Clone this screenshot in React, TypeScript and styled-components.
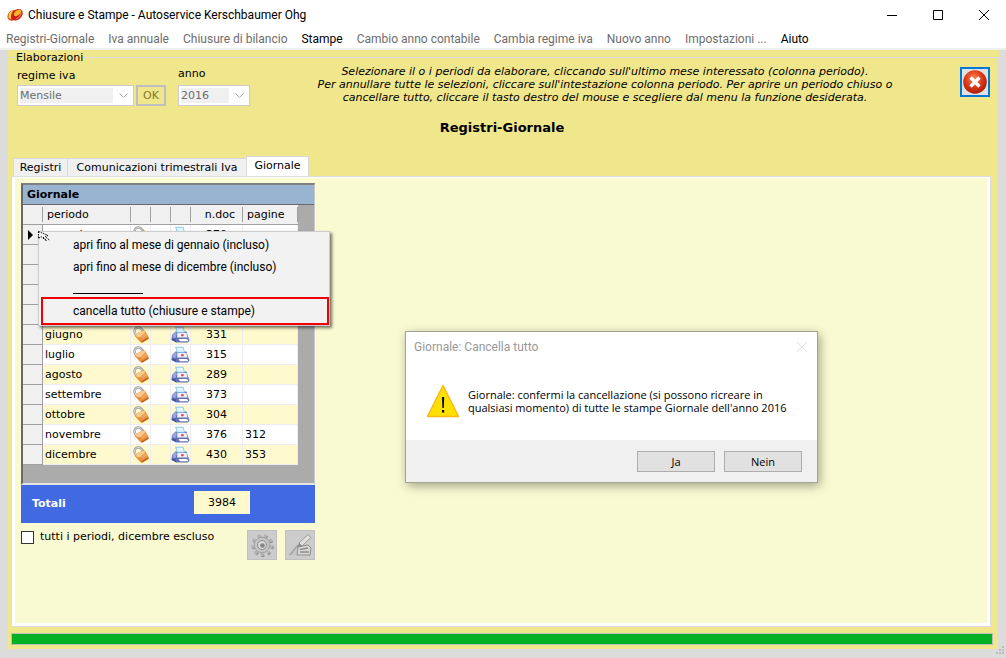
import React from "react";
import styled, { createGlobalStyle, css } from "styled-components";

const GlobalStyle = createGlobalStyle`
  * { box-sizing: border-box; }
  body {
    margin: 0;
    background: #dcdcdc;
    color: #000;
    font: 11px/16px "DejaVu Sans", sans-serif;
  }
  button, select, input { font: inherit; color: inherit; margin: 0; }
`;

const uiFont = css`
  font-family: Roboto, "Open Sans", sans-serif;
  font-size: 12px;
`;

const Window = styled.div`
  position: relative;
  display: flex;
  flex-direction: column;
  min-height: 100vh;
`;

const TitleBar = styled.header`
  ${uiFont}
  display: flex;
  align-items: center;
  height: 30px;
  padding: 0 16px 0 7px;
  background: #fff;
`;

const WindowTitle = styled.h1`
  flex: 1;
  margin: 0 0 0 5px;
  font-size: 12px;
  font-weight: 400;
`;

const CaptionButtons = styled.div`
  display: flex;
  gap: 34px;
`;

const CaptionButton = styled.button`
  display: flex;
  width: 12px;
  height: 12px;
  padding: 0;
  border: 0;
  background: none;
`;

const MenuBar = styled.nav`
  ${uiFont}
  display: flex;
  gap: 14px;
  height: 20px;
  padding: 0 6px;
  background: #fff;
  border-bottom: 2px solid #f0f0f0;
`;

const MenuEntry = styled.button`
  padding: 0;
  border: 0;
  background: none;
  line-height: 18px;
  white-space: nowrap;
  color: ${(p) => (p.disabled ? "#6d6d6d" : "#000")};
`;

const Frame = styled.main`
  flex: 1;
  display: flex;
  margin: 0 7px 8px 8px;
  background: #f0e68c;
`;

const Group = styled.fieldset`
  flex: 1;
  display: flex;
  flex-direction: column;
  min-width: 0;
  margin: 0;
  padding: 0 5px 4px 2px;
  border: 1px solid #dcdcdc;
  border-left-color: #f0e68c;
`;

const Legend = styled.legend`
  margin-left: 4px;
  padding: 0 1px;
  line-height: 15px;
`;

const HeaderRow = styled.div`
  display: flex;
  align-items: flex-start;
  padding: 0 3px 0 6px;
`;

const Filters = styled.div`
  display: flex;
  align-items: flex-end;
  padding-top: 1px;
`;

const Field = styled.div<{ $width: number; $gap: number }>`
  display: flex;
  flex-direction: column;
  gap: ${(p) => p.$gap}px;
  width: ${(p) => p.$width}px;
`;

const SelectBox = styled.div`
  display: flex;
  align-items: center;
  height: 21px;
  padding: 2px;
  border: 1px solid #ccc;
  background: #fff;
`;

const Select = styled.select`
  flex: 1;
  min-width: 0;
  height: 15px;
  padding: 0;
  border: 0;
  appearance: none;
  background: #f0f0f0;
  line-height: 15px;
  color: #6d6d6d;
  opacity: 1;
`;

const Chevron = styled.svg`
  margin: 0 3px 0 6px;
`;

const OkButton = styled.button`
  width: 30px;
  height: 21px;
  margin: 0 12px 0 2px;
  padding: 0;
  border: 2px solid #bfbfbf;
  background: #f0e68c;
  color: #827a2c;
`;

const Hint = styled.p`
  flex: 1;
  margin: 0;
  line-height: 13px;
  font-style: italic;
  text-align: center;
`;

const CloseButton = styled.button`
  display: flex;
  width: 30px;
  height: 30px;
  margin-top: 2px;
  padding: 1px;
  border: 2px solid #0078d7;
  background: #e1e1e1;
`;

const SectionTitle = styled.h2`
  margin: 14px 0 20px;
  font-size: 13px;
  line-height: 16px;
  text-align: center;
`;

const Tabs = styled.div`
  display: flex;
  align-items: flex-end;
  padding-left: 2px;
`;

const Tab = styled.button<{ $width: number; $active?: boolean }>`
  width: ${(p) => p.$width}px;
  height: ${(p) => (p.$active ? 20 : 18)}px;
  padding: ${(p) => (p.$active ? "0 0 2px" : "0")};
  border: 1px solid #d9d9d9;
  border-bottom: 0;
  border-right-width: ${(p) => (p.$active ? 1 : 0)}px;
  background: ${(p) => (p.$active ? "#fff" : "#f0f0f0")};
  line-height: 16px;
`;

const Panel = styled.section`
  flex: 1;
  display: flex;
  margin-right: 2px;
  padding: 1px 3px 3px;
  border: 1px solid #dcdcdc;
  background: #fff;
`;

const PanelBody = styled.div`
  flex: 1;
  padding: 5px 6px;
  background: #fafad2;
`;

const Column = styled.div`
  position: relative;
  width: 294px;
`;

const GridBox = styled.div`
  padding-bottom: 18px;
  border: 2px solid #696969;
  border-top-color: #808080;
  border-right: 1px solid #c8c8c8;
  border-bottom: 2px solid #e3e3e3;
  background: #ababab;
`;

const Table = styled.table`
  width: 275px;
  table-layout: fixed;
  border-collapse: separate;
  border-spacing: 0;
`;

const GridCaption = styled.h3`
  margin: 0;
  padding: 0 4px;
  height: 20px;
  border-bottom: 1px solid #696969;
  background: #99b4d1;
  font-size: 11px;
  line-height: 20px;
`;

const HeadCell = styled.th`
  height: 20px;
  padding: 0 4px;
  border-bottom: 1px solid #a0a0a0;
  background:
    linear-gradient(#a0a0a0, #a0a0a0) right 2px / 1px 15px no-repeat,
    #f0f0f0;
  font-weight: 400;
  line-height: 17px;
  text-align: left;
`;

const NumHeadCell = styled(HeadCell)`
  padding-right: 8px;
  text-align: right;
`;

const Row = styled.tr`
  background: #fff;
  &:nth-child(even) { background: #fffacd; }
`;

const RowHead = styled.th`
  width: 20px;
  height: 20px;
  padding: 0 0 0 5px;
  border-right: 1px solid #a0a0a0;
  border-bottom: 1px solid #a0a0a0;
  background: #f0f0f0;
  line-height: 0;
  text-align: left;
`;

const Cell = styled.td`
  height: 20px;
  padding: 0 2px;
  border-right: 1px solid #ececf2;
  border-bottom: 1px solid #ececf2;
  line-height: 18px;
  white-space: nowrap;
`;

const IconCell = styled(Cell)`
  padding: 0;
  line-height: 0;
  svg { display: block; margin: 0 auto; }
`;

const NumCell = styled(Cell)`
  text-align: center;
`;

const Totals = styled.div`
  display: flex;
  align-items: flex-start;
  height: 38px;
  padding: 6px 65px 0 11px;
  background: #4169e1;
  color: #fff;
  font-weight: 700;
`;

const TotalLabel = styled.label`
  flex: 1;
  padding-top: 5px;
`;

const TotalValue = styled.input`
  width: 56px;
  height: 23px;
  padding: 0;
  border: 0;
  background: #fffacd;
  color: #000;
  font-weight: 400;
  text-align: center;
`;

const Actions = styled.div`
  display: flex;
  align-items: flex-start;
  gap: 8px;
  margin-top: 7px;
`;

const CheckLabel = styled.label`
  flex: 1;
  display: flex;
  align-items: center;
  gap: 6px;
  line-height: 14px;
`;

const Checkbox = styled.input`
  width: 13px;
  height: 13px;
  appearance: none;
  border: 1px solid #333;
  background: #fff;
`;

const ToolButton = styled.button`
  display: flex;
  width: 30px;
  height: 30px;
  padding: 2px;
  border: 1px solid #bfbfbf;
  background: #ccc;
`;

const ContextMenu = styled.div`
  ${uiFont}
  position: absolute;
  top: 48px;
  left: 17px;
  width: 292px;
  padding: 2px 0 0 2px;
  border: 1px solid #ccc;
  background: #f2f2f2;
  box-shadow: 2px 2px 3px rgba(0, 0, 0, 0.55);
`;

const MenuItem = styled.button<{ $marked?: boolean }>`
  display: block;
  width: 100%;
  height: ${(p) => (p.$marked ? 28 : 22)}px;
  padding: 0 ${(p) => (p.$marked ? 30 : 32)}px;
  border: ${(p) => (p.$marked ? "2px solid #f00000" : "0")};
  background: none;
  text-align: left;
`;

const MenuRule = styled.hr`
  width: 70px;
  height: 1px;
  margin: 15px 0 3px 32px;
  border: 0;
  background: #000;
`;

const Pointer = styled.svg`
  position: absolute;
  top: -1px;
  left: -1px;
`;

const Progress = styled.div`
  height: 12px;
  margin-top: 6px;
  border: 1px solid #bcbcbc;
  background: #06b025;
`;

const Dialog = styled.div`
  ${uiFont}
  position: absolute;
  top: 331px;
  left: 405px;
  width: 413px;
  border: 1px solid #a3a393;
  background: #fff;
  box-shadow: 2px 3px 10px rgba(0, 0, 0, 0.35);
`;

const DialogTitle = styled.div`
  display: flex;
  justify-content: space-between;
  align-items: center;
  height: 30px;
  padding: 0 9px 0 8px;
  color: #999;
`;

const DialogBody = styled.div`
  display: flex;
  align-items: center;
  gap: 8px;
  height: 78px;
  padding: 0 20px;
`;

const DialogText = styled.p`
  margin: 0;
  font-family: "Open Sans", sans-serif;
  font-size: 11px;
  line-height: 13px;
`;

const DialogFooter = styled.div`
  display: flex;
  justify-content: flex-end;
  gap: 9px;
  padding: 11px 15px 10px;
  background: #f0f0f0;
`;

const DialogButton = styled.button`
  width: 78px;
  height: 21px;
  padding: 0;
  border: 1px solid #adadad;
  background: #e1e1e1;
  font-family: "Open Sans", sans-serif;
  font-size: 11px;
`;

const Grip = styled.svg`
  position: absolute;
  right: 0;
  bottom: 2px;
`;

const Logo = () => (
  <svg width="16" height="14" viewBox="0 0 16 14" aria-hidden="true">
    <ellipse cx="5.500" cy="7.400" rx="5.800" ry="4.600" transform="rotate(-50 5.500 7.400)" fill="#e0521a" />
    <ellipse cx="10" cy="6.800" rx="6.600" ry="4.800" transform="rotate(-45 10 6.800)" fill="#c8201c" />
    <ellipse cx="10.500" cy="4.800" rx="4.200" ry="2.400" transform="rotate(-38 10.500 4.800)" fill="#f9b52a" />
    <path d="M1.800 10C1 6 3.500 2.800 6.500 1.800 4.500 4.500 3.600 7.500 4 11Z" fill="#ffd24a" />
    <path d="M9 11C11.500 10 13.800 7.500 14.300 4.500" stroke="#f07a4a" strokeWidth="1.200" fill="none" />
  </svg>
);

const Lock = () => (
  <svg width="16" height="17" viewBox="0 0 16 17" aria-hidden="true">
    <path d="M3.500 10.500 1.800 6.800C0.800 3.500 3 1.600 5 1.500 8 1.300 9.500 3.500 11 6.500" fill="none" stroke="#9c9a98" strokeWidth="2.400" />
    <path d="M3.200 9.500 1.800 6.500C1 3.500 3 1.800 5 1.600 7 1.500 8.500 2.600 9.500 4.300" fill="none" stroke="#e6e4e2" strokeWidth="1" />
    <path d="M2.500 9.300Q6 5 12 4.600L15.800 11.500Q15.800 12.800 14.800 13.400L9.300 16.800 7.500 16.300 3 11.500Z" fill="#e78f3c" />
    <path d="M2.500 9.300Q6 5 12 4.600L12.500 6 7.500 11 4.500 11.500Z" fill="#fbc98a" />
    <path d="M7.500 11 12.500 6 14.500 9.500 9 13.500Z" fill="#f2a354" />
    <path d="M8.800 16.800 15.700 12.600 15.300 11.300 8.500 15.400Z" fill="#b3601f" />
  </svg>
);

const Printer = () => (
  <svg width="19" height="17" viewBox="0 0 19 17" aria-hidden="true">
    <path d="M1 9 4.500 5.500 15.500 5.500 17 10.500 18.500 14.500 17 16.500H5L0.500 14Z" fill="#6472b6" />
    <path d="M4 0.800H12.500L14 6.800H6Z" fill="#8ccdf0" />
    <path d="M5.300 1.800H11.800L12.800 5.800H6.700Z" fill="#e2f6ff" />
    <path d="M1.500 9 4.500 6 6 7.500 4.500 12 1.200 11.500Z" fill="#99a5dc" />
    <path d="M6.500 7H15.500L16.500 11.500H6Z" fill="#eceefa" />
    <path d="M1 12.200 5 13.500V15.800L0.800 14Z" fill="#46529a" />
    <path d="M7.500 13H16L17.500 15.300H9Z" fill="#fff" />
    <rect x="10.200" y="8.200" width="2.400" height="2" fill="#e03a4a" />
  </svg>
);

const CloseBall = () => (
  <svg width="24" height="24" viewBox="0 0 24 24" aria-hidden="true">
    <defs>
      <radialGradient id="ball" cx="0.450" cy="0.350" r="0.650">
        <stop offset="0" stopColor="#f58a5c" />
        <stop offset="0.550" stopColor="#de3a17" />
        <stop offset="1" stopColor="#a81e0a" />
      </radialGradient>
    </defs>
    <circle cx="12" cy="12" r="11.800" fill="url(#ball)" />
    <path d="M7.500 7.500 16.500 16.500M16.500 7.500 7.500 16.500" stroke="#fff" strokeWidth="3.400" />
  </svg>
);

const Gear = () => (
  <svg width="24" height="24" viewBox="0 0 24 24" aria-hidden="true">
    <circle cx="12.800" cy="13" r="9.500" fill="none" stroke="#8e8e8e" strokeWidth="3" strokeDasharray="3 3.630" />
    <circle cx="12" cy="12" r="9.500" fill="none" stroke="#b4b4b4" strokeWidth="3" strokeDasharray="3 3.630" />
    <circle cx="12" cy="12" r="7.800" fill="#c4c4c4" stroke="#a2a2a2" />
    <circle cx="12" cy="12" r="4.500" fill="#dadada" stroke="#8e8e8e" />
    <circle cx="12.500" cy="12.500" r="2.300" fill="#858585" />
  </svg>
);

const Sign = () => (
  <svg width="24" height="24" viewBox="0 0 24 24" aria-hidden="true">
    <path d="M1 22 9 12 13 12 7 22Z" fill="#a2a2a2" />
    <path d="M3 22 9 14 10 22Z" fill="#c6c6c6" />
    <path d="M10 14 20 12 23 15 22 22 9 22Z" fill="#d6d6d6" stroke="#909090" />
    <path d="M12 19H21M12 16.500 20 15" stroke="#8e8e8e" strokeWidth="1.500" />
    <path d="M11 10 20 1.500 23 4.500 14 13Z" fill="#e0e0e0" stroke="#999" />
    <path d="M11 10 14 13 9.500 14Z" fill="#8a8a8a" />
  </svg>
);

const Warning = () => (
  <svg width="34" height="34" viewBox="0 0 34 34" aria-hidden="true">
    <path d="M17 1.500 32.500 32.500H1.500Z" fill="#ffe100" stroke="#fdb913" strokeWidth="1.500" strokeLinejoin="round" />
    <path d="M16 13h2.200l-.4 11h-1.400ZM16 26h2.200v2.400H16Z" fill="#000" />
  </svg>
);

const Down = () => (
  <Chevron width="9" height="6" viewBox="0 0 9 6" aria-hidden="true">
    <path d="M0.500 0.500 4.500 4.500 8.500 0.500" fill="none" stroke="#adadad" />
  </Chevron>
);

const menuEntries = [
  ["Registri-Giornale", false],
  ["Iva annuale", false],
  ["Chiusure di bilancio", false],
  ["Stampe", true],
  ["Cambio anno contabile", false],
  ["Cambia regime iva", false],
  ["Nuovo anno", false],
  ["Impostazioni ...", false],
  ["Aiuto", true],
] as const;

const months: { name?: string; docs?: number; pages?: number }[] = [
  { name: "gennaio", docs: 370 },
  {},
  {},
  {},
  {},
  { name: "giugno", docs: 331 },
  { name: "luglio", docs: 315 },
  { name: "agosto", docs: 289 },
  { name: "settembre", docs: 373 },
  { name: "ottobre", docs: 304 },
  { name: "novembre", docs: 376, pages: 312 },
  { name: "dicembre", docs: 430, pages: 353 },
];

const columnWidths = [20, 88, 20, 20, 20, 52, 55];

export default function App() {
  return (
    <Window>
      <GlobalStyle />
      <TitleBar>
        <Logo />
        <WindowTitle>Chiusure e Stampe - Autoservice Kerschbaumer Ohg</WindowTitle>
        <CaptionButtons>
          <CaptionButton aria-label="Minimize">
            <svg width="12" height="12"><path d="M1 6.500H11" stroke="#000" /></svg>
          </CaptionButton>
          <CaptionButton aria-label="Maximize">
            <svg width="12" height="12"><path d="M1.500 1.500h9v9h-9Z" fill="none" stroke="#000" /></svg>
          </CaptionButton>
          <CaptionButton aria-label="Close">
            <svg width="12" height="12"><path d="M1 1 11 11M11 1 1 11" stroke="#000" /></svg>
          </CaptionButton>
        </CaptionButtons>
      </TitleBar>
      <MenuBar>
        {menuEntries.map(([label, enabled]) => (
          <MenuEntry key={label} disabled={!enabled}>{label}</MenuEntry>
        ))}
      </MenuBar>
      <Frame>
        <Group>
          <Legend>Elaborazioni</Legend>
          <HeaderRow>
            <Filters>
              <Field $width={117} $gap={1}>
                <label htmlFor="regime">regime iva</label>
                <SelectBox>
                  <Select id="regime" disabled><option>Mensile</option></Select>
                  <Down />
                </SelectBox>
              </Field>
              <OkButton disabled>OK</OkButton>
              <Field $width={72} $gap={3}>
                <label htmlFor="anno">anno</label>
                <SelectBox>
                  <Select id="anno" disabled><option>2016</option></Select>
                  <Down />
                </SelectBox>
              </Field>
            </Filters>
            <Hint>
              Selezionare il o i periodi da elaborare, cliccando sull'ultimo mese interessato (colonna periodo).<br />
              Per annullare tutte le selezioni, cliccare sull'intestazione colonna periodo. Per aprire un periodo chiuso o<br />
              cancellare tutto, cliccare il tasto destro del mouse e scegliere dal menu la funzione desiderata.
            </Hint>
            <CloseButton aria-label="Chiudi"><CloseBall /></CloseButton>
          </HeaderRow>
          <SectionTitle>Registri-Giornale</SectionTitle>
          <Tabs role="tablist">
            <Tab role="tab" $width={54}>Registri</Tab>
            <Tab role="tab" $width={179}>Comunicazioni trimestrali Iva</Tab>
            <Tab role="tab" aria-selected $width={63} $active>Giornale</Tab>
          </Tabs>
          <Panel>
            <PanelBody>
              <Column>
                <GridBox>
                  <GridCaption>Giornale</GridCaption>
                  <Table>
                    <colgroup>
                      {columnWidths.map((w, i) => <col key={i} width={w} />)}
                    </colgroup>
                    <thead>
                      <tr>
                        <HeadCell />
                        <HeadCell>periodo</HeadCell>
                        <HeadCell />
                        <HeadCell />
                        <HeadCell />
                        <NumHeadCell>n.doc</NumHeadCell>
                        <HeadCell>pagine</HeadCell>
                      </tr>
                    </thead>
                    <tbody>
                      {months.map((m, i) => (
                        <Row key={i}>
                          <RowHead>
                            {i === 0 && (
                              <svg width="6" height="10"><path d="M0 0 5 5 0 10Z" /></svg>
                            )}
                          </RowHead>
                          <Cell>{m.name}</Cell>
                          <IconCell><Lock /></IconCell>
                          <IconCell />
                          <IconCell><Printer /></IconCell>
                          <NumCell>{m.docs}</NumCell>
                          <Cell>{m.pages}</Cell>
                        </Row>
                      ))}
                    </tbody>
                  </Table>
                </GridBox>
                <Totals>
                  <TotalLabel htmlFor="totale">Totali</TotalLabel>
                  <TotalValue id="totale" readOnly value="3984" />
                </Totals>
                <Actions>
                  <CheckLabel>
                    <Checkbox type="checkbox" />
                    tutti i periodi, dicembre escluso
                  </CheckLabel>
                  <ToolButton disabled aria-label="Elabora"><Gear /></ToolButton>
                  <ToolButton disabled aria-label="Stampa"><Sign /></ToolButton>
                </Actions>
                <ContextMenu>
                  <MenuItem>apri fino al mese di gennaio (incluso)</MenuItem>
                  <MenuItem>apri fino al mese di dicembre (incluso)</MenuItem>
                  <MenuRule />
                  <MenuItem $marked>cancella tutto (chiusure e stampe)</MenuItem>
                  <Pointer width="14" height="12" viewBox="0 0 14 12" aria-hidden="true">
                    <path d="M0.500 0.500V7.500L3 5.500 8 9.500M0.500 0.500 10 4.500 7 5.500 12 9.500M5 6 9 10" fill="#fff" stroke="#000" strokeDasharray="1.500 1" />
                  </Pointer>
                </ContextMenu>
              </Column>
            </PanelBody>
          </Panel>
          <Progress role="progressbar" aria-valuenow={100} />
        </Group>
      </Frame>
      <Dialog role="dialog" aria-labelledby="dialog-title">
        <DialogTitle>
          <span id="dialog-title">Giornale: Cancella tutto</span>
          <CaptionButton aria-label="Chiudi">
            <svg width="12" height="12"><path d="M1 1 11 11M11 1 1 11" stroke="#dedede" /></svg>
          </CaptionButton>
        </DialogTitle>
        <DialogBody>
          <Warning />
          <DialogText>
            Giornale: confermi la cancellazione (si possono ricreare in<br />
            qualsiasi momento) di tutte le stampe Giornale dell'anno 2016
          </DialogText>
        </DialogBody>
        <DialogFooter>
          <DialogButton>Ja</DialogButton>
          <DialogButton>Nein</DialogButton>
        </DialogFooter>
      </Dialog>
      <Grip width="10" height="10" viewBox="0 0 10 10" aria-hidden="true">
        <path d="M6 0h2v2H6ZM3 3h2v2H3ZM6 3h2v2H6ZM0 6h2v2H0ZM3 6h2v2H3ZM6 6h2v2H6Z" fill="#bbb" />
      </Grip>
    </Window>
  );
}
